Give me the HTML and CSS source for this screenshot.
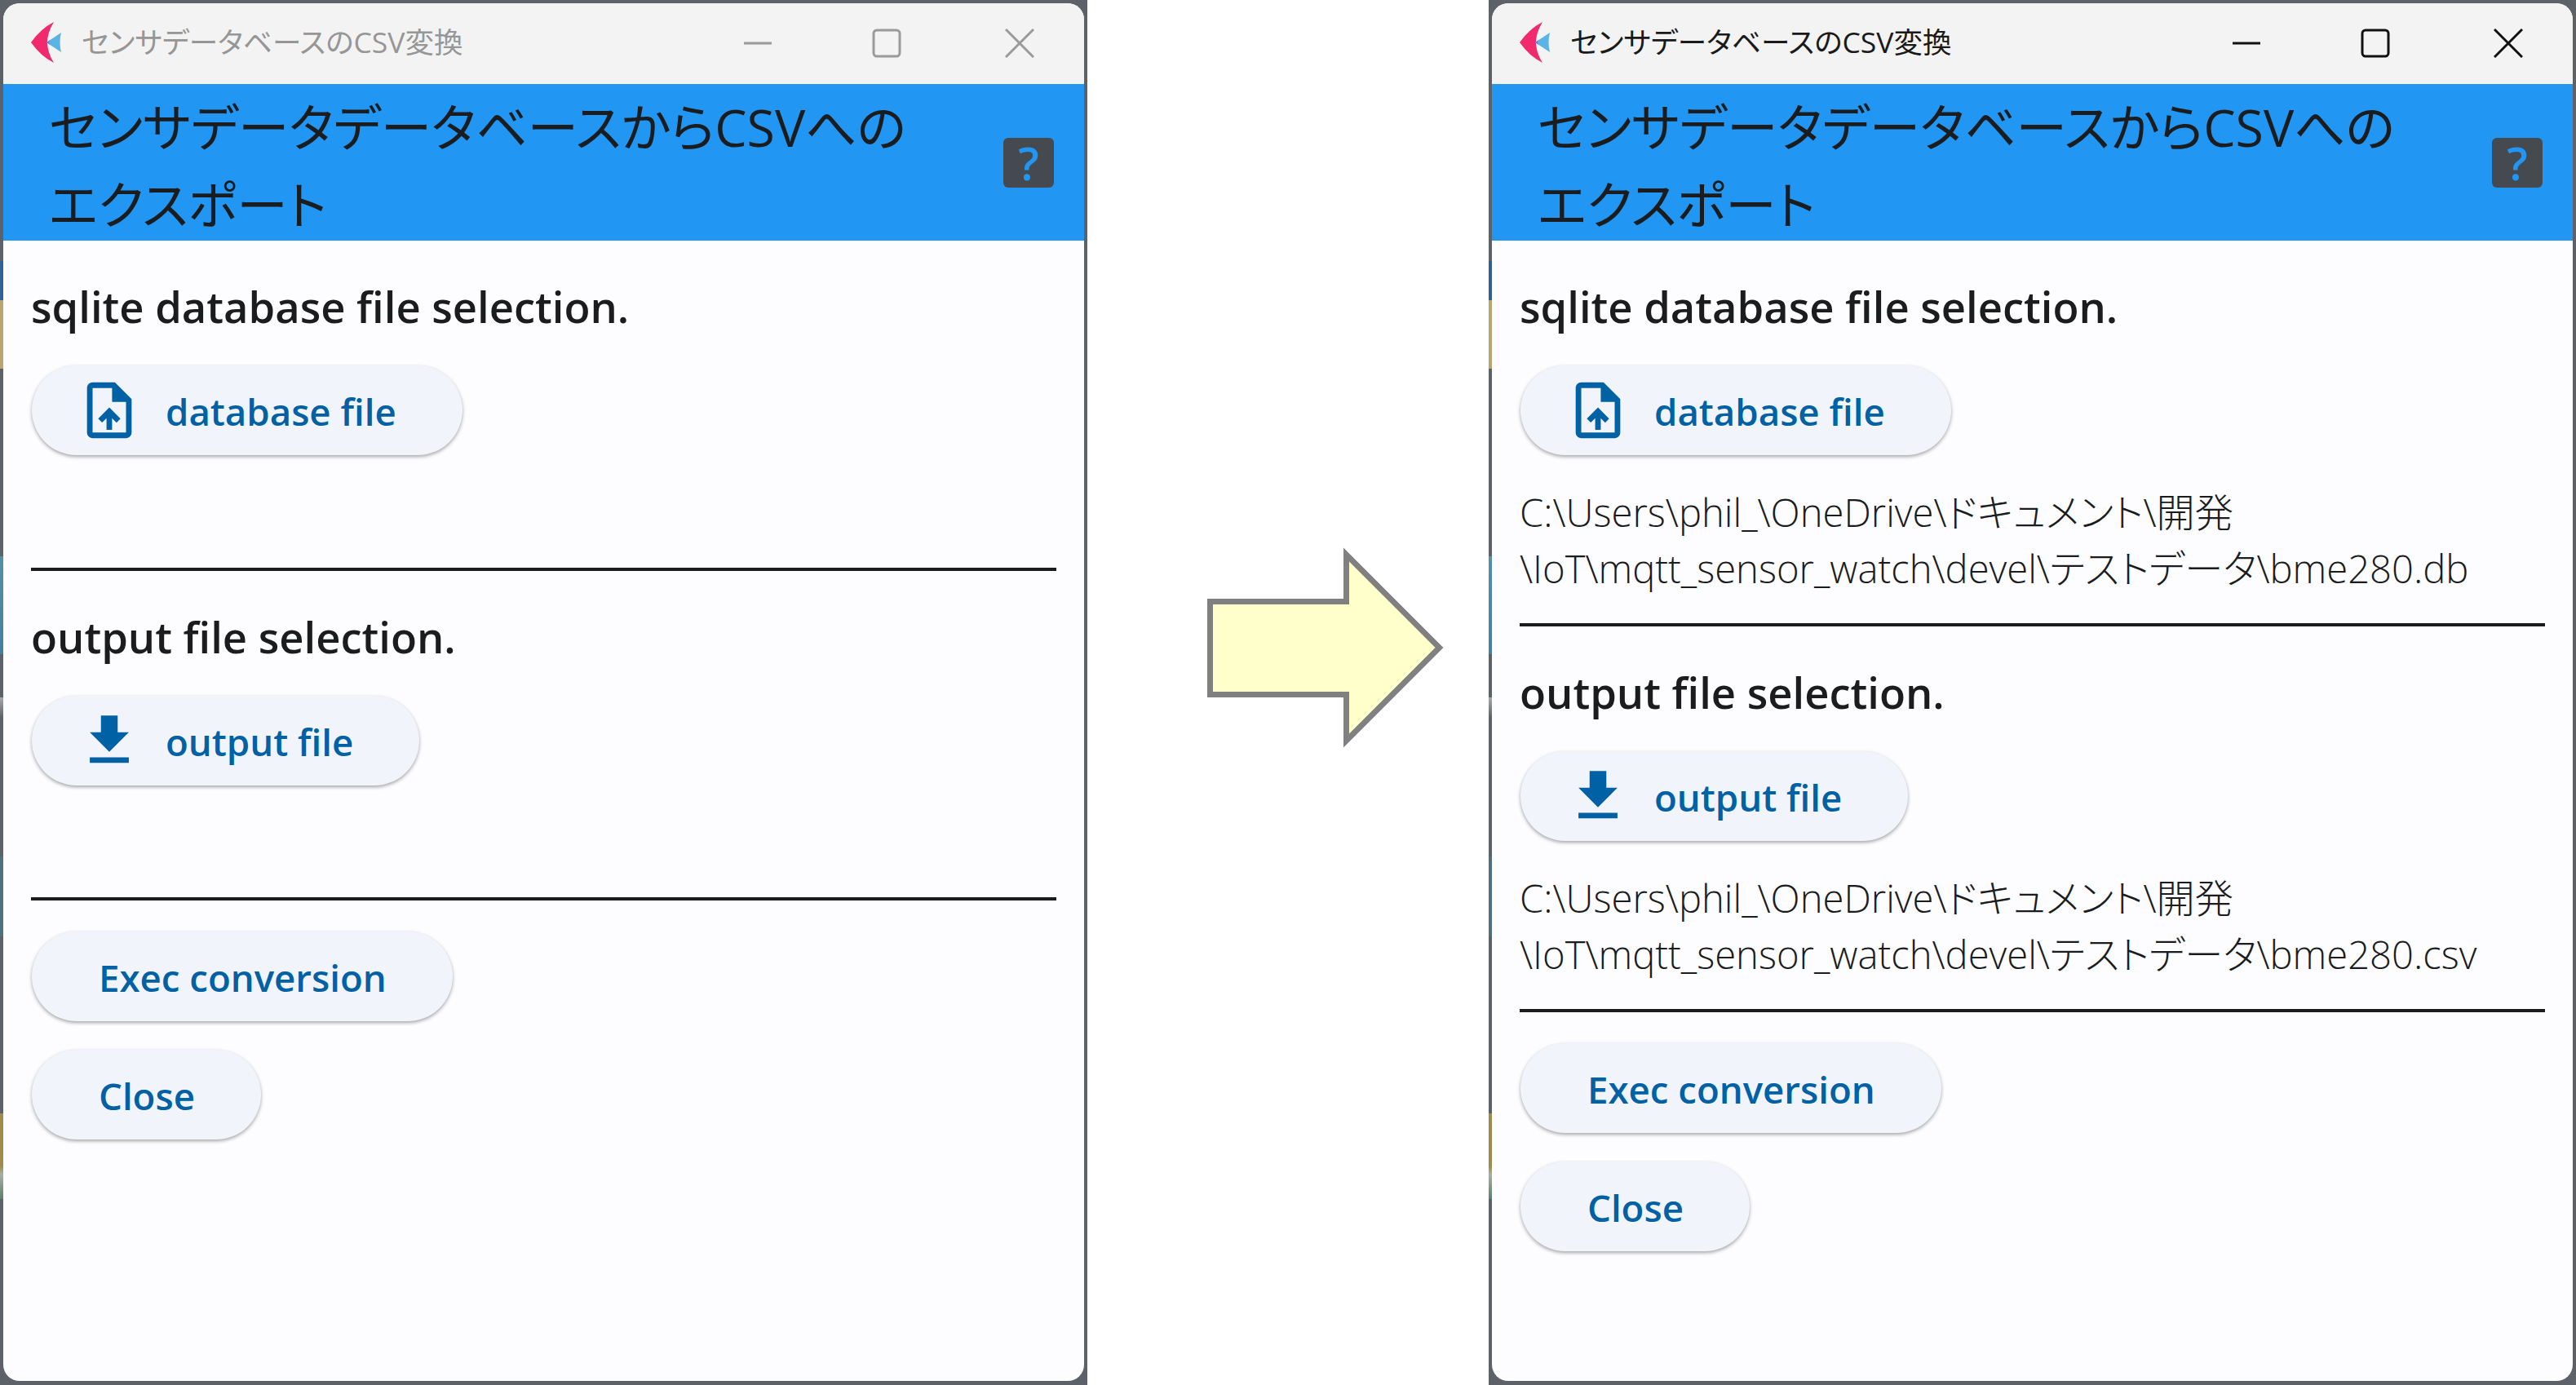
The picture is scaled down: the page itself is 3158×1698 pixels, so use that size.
FILE: index.html
```html
<!DOCTYPE html>
<html>
	<head>
		<meta charset="utf-8">
		<title>センサデータベースのCSV変換</title>
		<link rel="stylesheet" href="styles.css">
	</head>
	<body>
		<!-- 変換前 -->
		<div class="window inactive">
			<div class="app">
				<div class="titlebar">
					<svg class="logo" viewBox="0 0 37 50"><path fill="#f02a6c" d="M0 25Q12 8 28 0Q20 13 20 25Q20 37 28 50Q12 42 0 25Z"/><path fill="#5ab4e6" d="M37 13Q34 25 37 37L19 25Z"/><path fill="#6a82c4" d="M19 25L24 21.5Q20 25 24 28.5Z"/></svg>
					<span class="wintitle">センサデータベースのCSV変換</span>
					<div class="controls">
						<div class="ctl"><svg viewBox="0 0 36 36"><path d="M1 18H35"/></svg></div>
						<div class="ctl"><svg viewBox="0 0 36 36"><rect x="2" y="2" width="32" height="32" rx="4"/></svg></div>
						<div class="ctl"><svg viewBox="0 0 36 36"><path d="M1 1L35 35M35 1L1 35"/></svg></div>
					</div>
				</div>
				<div class="appbar">
					<div class="apptitle">センサデータデータベースからCSVへの<br>エクスポート</div>
					<div class="help">?</div>
				</div>
				<div class="pageBody">
					<div class="label">sqlite database file selection.</div>
					<div class="btn btn-icon">
						<svg class="icon" viewBox="0 0 24 24"><path d="M14 2H6c-1.1 0-1.99.9-1.99 2L4 20c0 1.1.89 2 1.99 2H18c1.1 0 2-.9 2-2V8l-6-6zm4 18H6V4h7v5h5v11zM8 15.01l1.41 1.41L11 14.84V19h2v-4.16l1.59 1.59L16 15.01 12.01 11z"/></svg>
						<span>database file</span>
					</div>
					<div class="path">&nbsp;</div>
					<hr class="line">
					<div class="label">output file selection.</div>
					<div class="btn btn-icon">
						<svg class="icon" viewBox="0 0 24 24"><path d="M19 9h-4V3H9v6H5l7 7 7-7zM5 18v2h14v-2H5z"/></svg>
						<span>output file</span>
					</div>
					<div class="path">&nbsp;</div>
					<hr class="line">
					<div class="actions">
						<div class="btn">Exec conversion</div>
						<div class="btn">Close</div>
					</div>
				</div>
			</div>
		</div>

		<svg class="arrow" viewBox="0 0 296 252"><polygon points="7.5,69.5 174.5,69.5 174.5,12 288.5,126 174.5,240 174.5,183.5 7.5,183.5"/></svg>

		<!-- 変換後 -->
		<div class="window">
			<div class="app">
				<div class="titlebar">
					<svg class="logo" viewBox="0 0 37 50"><path fill="#f02a6c" d="M0 25Q12 8 28 0Q20 13 20 25Q20 37 28 50Q12 42 0 25Z"/><path fill="#5ab4e6" d="M37 13Q34 25 37 37L19 25Z"/><path fill="#6a82c4" d="M19 25L24 21.5Q20 25 24 28.5Z"/></svg>
					<span class="wintitle">センサデータベースのCSV変換</span>
					<div class="controls">
						<div class="ctl"><svg viewBox="0 0 36 36"><path d="M1 18H35"/></svg></div>
						<div class="ctl"><svg viewBox="0 0 36 36"><rect x="2" y="2" width="32" height="32" rx="4"/></svg></div>
						<div class="ctl"><svg viewBox="0 0 36 36"><path d="M1 1L35 35M35 1L1 35"/></svg></div>
					</div>
				</div>
				<div class="appbar">
					<div class="apptitle">センサデータデータベースからCSVへの<br>エクスポート</div>
					<div class="help">?</div>
				</div>
				<div class="pageBody">
					<div class="label">sqlite database file selection.</div>
					<div class="btn btn-icon">
						<svg class="icon" viewBox="0 0 24 24"><path d="M14 2H6c-1.1 0-1.99.9-1.99 2L4 20c0 1.1.89 2 1.99 2H18c1.1 0 2-.9 2-2V8l-6-6zm4 18H6V4h7v5h5v11zM8 15.01l1.41 1.41L11 14.84V19h2v-4.16l1.59 1.59L16 15.01 12.01 11z"/></svg>
						<span>database file</span>
					</div>
					<div class="path">C:\Users\phil_\OneDrive\ドキュメント\開発<br>\IoT\mqtt_sensor_watch\devel\テストデータ\bme280.db</div>
					<hr class="line">
					<div class="label">output file selection.</div>
					<div class="btn btn-icon">
						<svg class="icon" viewBox="0 0 24 24"><path d="M19 9h-4V3H9v6H5l7 7 7-7zM5 18v2h14v-2H5z"/></svg>
						<span>output file</span>
					</div>
					<div class="path">C:\Users\phil_\OneDrive\ドキュメント\開発<br>\IoT\mqtt_sensor_watch\devel\テストデータ\bme280.csv</div>
					<hr class="line">
					<div class="actions">
						<div class="btn">Exec conversion</div>
						<div class="btn">Close</div>
					</div>
				</div>
			</div>
		</div>
	</body>
</html>
```
FILE: styles.css
```css
body{
	margin:0;
	width:3158px;
	height:1698px;
	display:flex;
	overflow:hidden;
	background:#fff;
	font-family:"Open Sans","Noto Sans CJK JP",sans-serif;
	font-feature-settings:"palt";
	color:#1a1c1e;
}
/* window frame, the wallpaper shows along the left edge */
.window{
	width:1333px;
	height:1698px;
	box-sizing:border-box;
	padding:4px 4px 5px 4px;
	background-color:#5c6268;
	background-image:linear-gradient(#5c6268 320px,#2f6098 320px,#2f6098 368px,#b8a570 368px,#b8a570 452px,#5c6268 452px,#5c6268 682px,#558fa8 682px,#44809f 802px,#5c6268 802px,#5c6268 855px,#a8a8a8 855px,#5c6268 880px,#5c6268 1050px,#4f7080 1050px,#4f7080 1148px,#5c6268 1148px,#5c6268 1365px,#a08a4c 1365px,#a08a4c 1430px,#a8b0a0 1440px,#5c8068 1470px,#5c6268 1470px);
	background-size:4px 100%;
	background-repeat:no-repeat;
}
.app{
	height:100%;
	display:flex;
	flex-direction:column;
	background:#fdfcff;
	border-radius:20px;
	overflow:hidden;
}
.titlebar{
	height:98px;
	flex:none;
	display:flex;
	align-items:center;
	padding-left:34px;
	background:#f3f3f3;
	border-bottom:1px solid #f5efe9;
}
.logo{width:37px;height:50px;flex:none;margin-top:-2px;}
.wintitle{
	margin-left:25px;
	margin-top:-8px;
	font-size:35.5px;
	font-weight:400;
	color:#1a1a1a;
}
.inactive .wintitle{color:#969696;}
.controls{margin-left:auto;display:flex;}
.ctl{
	width:158px;
	height:98px;
	display:flex;
	align-items:center;
	justify-content:center;
}
.ctl:last-child{margin-left:5px;}
.ctl svg{width:36px;height:36px;fill:none;stroke:#111;stroke-width:3;}
.inactive .ctl svg{stroke:#9a9a9a;}

.appbar{
	height:192px;
	flex:none;
	display:flex;
	align-items:center;
	justify-content:space-between;
	padding:0 37px 0 56px;
	box-sizing:border-box;
	background:#2196f3;
}
.apptitle{
	margin-top:8px;
	font-size:62.5px;
	line-height:95px;
	font-weight:400;
	color:#1a1c1e;
}
.help{
	width:62px;
	height:61px;
	border-radius:6px;
	background:#454a50;
	color:#2196f3;
	font-size:56px;
	font-weight:600;
	line-height:61px;
	text-align:center;
}
.pageBody{
	flex:1;
	padding:0 34px;
}
.label{
	font-size:52.5px;
	font-weight:600;
	line-height:68px;
	padding:47px 0 38px;
}
.btn{
	display:inline-flex;
	align-items:center;
	box-sizing:border-box;
	height:110px;
	margin-left:1px;
	padding:2px 81px 0 82px;
	border-radius:55px;
	background:#f1f4fb;
	box-shadow:0 2px 4px rgba(0,0,0,.35);
	color:#0061a4;
	font-size:45.6px;
	font-weight:600;
}
.btn-icon{padding-left:54px;}
.icon{width:82px;height:82px;fill:#0061a4;margin-right:28px;margin-top:-2px;}
.path{
	margin-top:36px;
	font-size:47.2px;
	font-weight:300;
	line-height:68.5px;
	color:#1a1c1e;
}
.line{
	margin:33px 0 0;
	height:4px;
	border:0;
	background:#1a1c1e;
}
.actions{
	display:flex;
	flex-direction:column;
	align-items:flex-start;
	gap:35px;
	padding-top:38px;
}
.arrow{
	width:296px;
	height:252px;
	flex:none;
	margin:668px auto 0 143px;
}
.arrow polygon{fill:#ffffcc;stroke:#808080;stroke-width:7;}
```
